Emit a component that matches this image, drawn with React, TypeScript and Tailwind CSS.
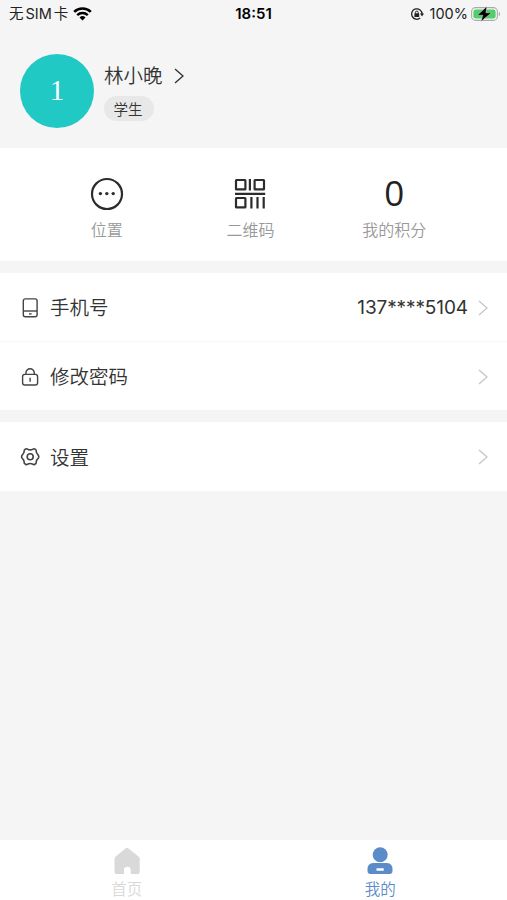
import type { ReactNode } from "react";

type IMenuItem = {
  title: string;
  icon: ReactNode;
  value?: string;
};

const Chevron = ({ className }: { className: string }) => (
  <svg
    viewBox="0 0 10 16"
    fill="none"
    stroke="currentColor"
    strokeWidth="1.4"
    className={`h-4 w-[10px] ${className}`}
  >
    <path d="M1 1l8 7-8 7" />
  </svg>
);

const WifiIcon = () => (
  <svg viewBox="0 0 19 14" className="h-[14px] w-[19px]" fill="none" stroke="#000">
    <path d="M1.2 4.9a12 12 0 0 1 16.6 0" strokeWidth="2.6" />
    <path d="M4.2 8.2a7.6 7.6 0 0 1 10.6 0" strokeWidth="2.4" />
    <path d="M9.5 13.6l-3-3.1a4.4 4.4 0 0 1 6 0z" fill="#000" stroke="none" />
  </svg>
);

const RotationLockIcon = () => (
  <svg viewBox="0 0 14 14" className="h-[14px] w-[14px]" fill="none" stroke="#222">
    <path d="M10.2 11A5.2 5.2 0 1 1 12 7.2" strokeWidth="1.3" />
    <path d="M10 6.6h4l-2 2.8z" fill="#222" stroke="none" />
    <rect x="4.4" y="6.2" width="4.8" height="3.8" rx="0.6" fill="#222" stroke="none" />
    <path d="M5.4 6.6V5.5a1.4 1.4 0 0 1 2.8 0v1.1" strokeWidth="1" />
  </svg>
);

const BatteryIcon = () => (
  <svg viewBox="0 0 30 16" className="h-4 w-[30px]">
    <rect x="0.6" y="1.6" width="25.8" height="12.8" rx="4" fill="#f5f5f5" stroke="#aaa" strokeWidth="1.1" />
    <rect x="2.4" y="3.4" width="22.2" height="9.2" rx="2.4" fill="#4fce6b" />
    <path d="M27.8 5.8c1.8.7 1.8 3.7 0 4.4z" fill="#aaa" />
    <path
      d="M15.8 0.6L6.4 9.2h5.4l-1.800 6.200L20.400 6.800h-5.500z"
      fill="#000"
      stroke="#f5f5f5"
      strokeWidth="0.4"
    />
  </svg>
);

const MoreIcon = () => (
  <svg viewBox="0 0 34 34" className="h-[34px] w-[34px]" fill="#2c2c2c">
    <circle cx="17" cy="17" r="15" fill="none" stroke="#2c2c2c" strokeWidth="2.2" />
    <circle cx="10.4" cy="16.6" r="1.7" />
    <circle cx="16.8" cy="16.6" r="1.7" />
    <circle cx="23.2" cy="16.6" r="1.7" />
  </svg>
);

const QrIcon = () => (
  <svg viewBox="0 0 32 32" className="h-8 w-8" fill="none" stroke="#2c2c2c" strokeWidth="2.2">
    <rect x="2" y="2" width="9.4" height="9.4" rx="0.5" />
    <rect x="20.6" y="2" width="9.4" height="9.4" rx="0.5" />
    <rect x="2" y="20" width="9.4" height="9.4" rx="0.5" />
    <path d="M15.9 1v11.500M1 15.800h30.200M17.400 19v11.500M23.500 19v11.500M29.700 19v11.500" />
  </svg>
);

const PhoneIcon = () => (
  <svg viewBox="0 0 20 20" className="h-5 w-5" fill="none" stroke="#444" strokeWidth="1.4">
    <rect x="3.3" y="0.9" width="13.8" height="17.8" rx="2" />
    <path d="M3.3 13h13.8" />
    <path d="M9 15.9h2.6" />
  </svg>
);

const LockIcon = () => (
  <svg viewBox="0 0 20 20" className="h-5 w-5" fill="none" stroke="#444" strokeWidth="1.4">
    <rect x="2.6" y="7.4" width="15" height="10.6" rx="2.2" />
    <path d="M5.900 7.400V6a4.200 4.200 0 0 1 8.400 0v1.400M10.100 10.700v4" />
  </svg>
);

const SettingIcon = () => (
  <svg
    viewBox="0 0 20 20"
    className="h-5 w-5"
    fill="none"
    stroke="#444"
    strokeWidth="1.6"
    strokeLinejoin="round"
  >
    <path d="M5.800 1.900Q6.700 1.500 7.500 2.200Q10.200 3.500 12.900 2.200Q13.700 1.500 14.600 1.900L15.700 2.700Q16.400 3.200 16.200 4.300Q16.300 6.400 18 7.800Q18.800 8.800 18.800 9.700Q18.800 10.600 18 11.600Q16.300 13 16.200 15.100Q16.400 16.200 15.700 16.700L14.600 17.500Q13.700 17.900 12.900 17.200Q10.200 15.900 7.500 17.200Q6.700 17.900 5.800 17.500L4.700 16.700Q4 16.200 4.200 15.100Q4.100 13 2.400 11.600Q1.600 10.600 1.600 9.700Q1.600 8.800 2.400 7.800Q4.100 6.400 4.200 4.300Q4 3.200 4.700 2.700Z" />
    <circle cx="10.200" cy="9.700" r="3" />
  </svg>
);

const HomeIcon = () => (
  <svg viewBox="0 0 28 28" className="h-7 w-7" fill="#d9d9d9">
    <path d="M12.800 1.300a2 2 0 0 1 2.400 0l10.300 8.100q1.200 1 1.200 2.500v13.200a2 2 0 0 1-2 2h-6.900v-4a3.400 3.400 0 0 0-6.800 0v4H3.500a2 2 0 0 1-2-2V11.900q0-1.500 1.200-2.500z" />
  </svg>
);

const UserIcon = () => (
  <svg viewBox="0 0 28 28" className="h-7 w-7" fill="#5b8bc9">
    <circle cx="14.200" cy="7.800" r="7.500" />
    <path
      fillRule="evenodd"
      d="M7.200 16h13.600q5.700 0 5.700 6.500v1.600q0 3-3 3H4.500q-3 0-3-3v-1.600Q1.500 16 7.200 16zM10.500 21.300v2.500h7.200v-2.500z"
    />
  </svg>
);

const accountMenu: IMenuItem[] = [
  { title: "手机号", icon: <PhoneIcon />, value: "137****5104" },
  { title: "修改密码", icon: <LockIcon /> },
];

const MenuRow = ({ item }: { item: IMenuItem }) => (
  <button className="flex h-[68.5px] w-full items-center pt-[2px] pr-[19px] pl-5 text-[19.5px] text-[#333]">
    {item.icon}
    <span className="ml-[10px] pt-[2px]">{item.title}</span>
    <span className="ml-auto pt-px text-[19px] font-normal tracking-[-0.1px]">{item.value}</span>
    <Chevron className="ml-[10px] text-[#c8c8c8]" />
  </button>
);

const App = () => {
  return (
    <div className="flex h-screen flex-col overflow-hidden bg-[#f5f5f5] font-[Inter,'Noto_Sans_CJK_SC',sans-serif] font-[350] text-[#333]">
      {/* Status bar */}
      <div className="grid h-7 shrink-0 grid-cols-3 items-center pr-[6px] pl-[9px] text-[14.5px] font-normal text-[#222]">
        <div className="flex items-center whitespace-nowrap">
          <span>无</span>
          <span className="ml-[2px]">SIM</span>
          <span className="mr-[5px] ml-[2px]">卡</span>
          <WifiIcon />
        </div>
        <div className="pr-[3px] text-center text-[15px] font-semibold text-black">18:51</div>
        <div className="flex items-center justify-end">
          <RotationLockIcon />
          <span className="mr-[3px] ml-[6px]">100%</span>
          <BatteryIcon />
        </div>
      </div>

      {/* Profile */}
      <div className="flex h-[120px] shrink-0 items-center pt-[6px] pl-[20px]">
        <div className="flex h-[74px] w-[74px] items-center justify-center rounded-full bg-[#20c9c3] font-['Liberation_Serif',serif] text-[29px] text-white">
          1
        </div>
        <div className="ml-[10px]">
          <div className="flex h-[29px] items-center text-[19.5px]">
            <span className="pt-[3px]">林小晚</span>
            <Chevron className="ml-[11px] text-[#333]" />
          </div>
          <div className="mt-[6px] flex h-[25px] w-[50px] items-center justify-center rounded-full bg-[#e8e8e8] pt-[3px] pr-[2px] text-[14.5px]">
            学生
          </div>
        </div>
      </div>

      {/* Shortcuts */}
      <div className="grid h-[113px] shrink-0 grid-cols-3 bg-white pt-[29px] pr-[41px] pl-[35px] text-[16px] text-[#999]">
        <div className="flex flex-col items-center">
          <div className="flex h-[34px] items-center">
            <MoreIcon />
          </div>
          <span className="mt-[7px]">位置</span>
        </div>
        <div className="flex flex-col items-center">
          <div className="flex h-[34px] items-center">
            <QrIcon />
          </div>
          <span className="mt-[7px]">二维码</span>
        </div>
        <div className="flex flex-col items-center">
          <div className="flex h-[34px] items-center pb-px font-['Open_Sans',sans-serif] text-[35px] font-normal text-[#222]">
            0
          </div>
          <span className="mt-[7px]">我的积分</span>
        </div>
      </div>

      {/* Menu */}
      <div className="mt-3 divide-y divide-[#f8f8f8] bg-white">
        {accountMenu.map((item) => (
          <MenuRow key={item.title} item={item} />
        ))}
      </div>
      <div className="mt-3 bg-white">
        <MenuRow item={{ title: "设置", icon: <SettingIcon /> }} />
      </div>

      {/* Tab bar */}
      <div className="mt-auto grid h-[60px] shrink-0 grid-cols-2 bg-white pt-[7px] text-[15.5px]">
        <div className="flex flex-col items-center text-[#d9d9d9]">
          <HomeIcon />
          <span className="mt-[3px]">首页</span>
        </div>
        <div className="flex flex-col items-center text-[#5b8bc9]">
          <UserIcon />
          <span className="mt-[3px]">我的</span>
        </div>
      </div>
    </div>
  );
};

export default App;
